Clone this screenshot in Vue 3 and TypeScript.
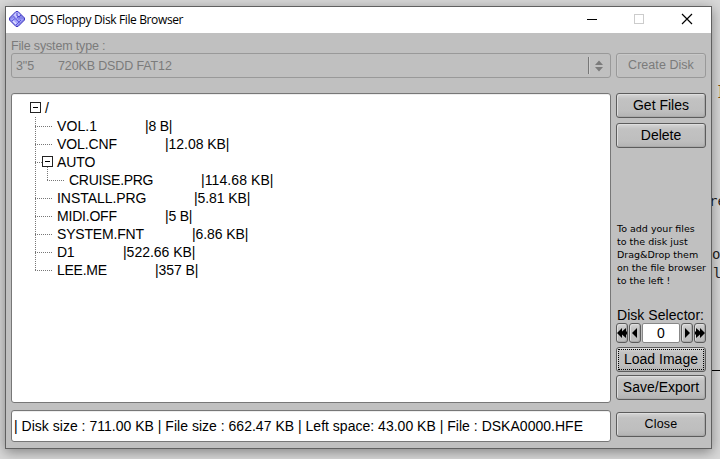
<script setup lang="ts">
interface Entry {
  name: string
  textWidth: number
  size?: string
  sizeX?: number
  sizeWidth?: number
  nested?: boolean
  last?: boolean
}

const entries: Entry[] = [
  { name: 'VOL.1', textWidth: 40, size: '|8 B|', sizeX: 88, sizeWidth: 27.5 },
  { name: 'VOL.CNF', textWidth: 60, size: '|12.08 KB|', sizeX: 108, sizeWidth: 64.5 },
  { name: 'AUTO', textWidth: 38.5 },
  { name: 'CRUISE.PRG', textWidth: 84.5, size: '|114.68 KB|', sizeX: 132, sizeWidth: 72.5, nested: true },
  { name: 'INSTALL.PRG', textWidth: 89.5, size: '|5.81 KB|', sizeX: 137, sizeWidth: 56.5 },
  { name: 'MIDI.OFF', textWidth: 60, size: '|5 B|', sizeX: 108, sizeWidth: 27.5 },
  { name: 'SYSTEM.FNT', textWidth: 87, size: '|6.86 KB|', sizeX: 135, sizeWidth: 56.5 },
  { name: 'D1', textWidth: 17.5, size: '|522.66 KB|', sizeX: 66, sizeWidth: 72.5 },
  { name: 'LEE.ME', textWidth: 50, size: '|357 B|', sizeX: 98, sizeWidth: 43.5, last: true },
]

const hint: string[] = ['To add your files', 'to the disk just', 'Drag&Drop them', 'on the file browser', 'to the left !']
</script>

<template>
  <div class="desktop">
    <span class="behind b1">]</span>
    <span class="behind b2">re</span>
    <span class="behind b3">o</span>
    <span class="behind b4">l</span>
    <span class="rule"></span>

    <div class="window">
      <header class="titlebar">
        <svg class="logo" width="16" height="16" viewBox="0 0 16 16">
          <path d="M7 .5h2L15.5 7v2L9 15.5H7L.5 9V7z" fill="#8585ea" stroke="#4038c0" />
          <path d="M7 1.5 3.5 5l4 3.7L12 4.6 9 1.5z" fill="#c8c8ff" />
          <path d="m4 4.5 3 3.3 5-3.6M8 2v3l3 1" fill="none" stroke="#463fd0" />
          <path d="m1.5 8 5-1.5 3 2.5 5-1-6.500 6.500z" fill="#a8a8fa" />
          <path d="m3 10 3-2.500 4.500 4M7 14l5-5" fill="none" stroke="#5850da" />
          <path d="m4 10 3 3" stroke="#e0e0ff" stroke-width="1.500" />
        </svg>
        <span class="title">DOS Floppy Disk File Browser</span>
        <svg class="controls" width="120" height="20" viewBox="0 0 120 20" shape-rendering="crispEdges">
          <path d="M1 9.500h10" stroke="#000" />
          <rect x="48.500" y="4.500" width="9" height="9" fill="none" stroke="#ccc" />
          <path d="m96 4 10 10M106 4 96 14" stroke="#000" shape-rendering="auto" stroke-width="1.200" />
        </svg>
      </header>

      <main class="content">
        <section class="left">
          <label class="fs-label">File system type :</label>
          <div class="combo">
            <span class="combo-id">3"5</span>
            <span class="combo-name">720KB DSDD FAT12</span>
            <span class="divider"></span>
            <svg width="8" height="12" viewBox="0 0 8 12">
              <path d="M4 .5 8 5H0zM4 11.500 8 7H0z" fill="#7b7b7b" />
            </svg>
          </div>
          <div class="tree">
            <div class="row root">
              <svg class="toggle" width="11" height="11" viewBox="0 0 11 11" shape-rendering="crispEdges">
                <path d="M.5.5h10v10H.5z" fill="#fff" stroke="#222" /><path d="M3 5.500h5" stroke="#000" />
              </svg>
              <span class="root-name">/</span>
            </div>
            <div v-for="entry in entries" :key="entry.name" class="row">
              <svg class="lines" :width="entry.nested ? 34 : 22" height="18" shape-rendering="crispEdges">
                <g fill="none" stroke="#777" stroke-dasharray="1 1">
                  <path :d="entry.last ? 'M.5 0v9' : 'M.5 0v18'" />
                  <path v-if="entry.nested" d="M12.500 0v9M12 9.500h17" />
                  <path v-else d="M0 9.500h17" />
                </g>
                <g v-if="entry.name === 'AUTO'">
                  <path d="M12.500 14v4" stroke="#777" stroke-dasharray="1 1" />
                  <path d="M7.500 3.500h10v10h-10z" fill="#fff" stroke="#222" />
                  <path d="M10 8.500h5" stroke="#000" />
                </g>
              </svg>
              <svg class="text" height="18" width="240">
                <text x="0" y="14" :textLength="entry.textWidth">{{ entry.name }}</text>
                <text v-if="entry.size" :x="entry.sizeX" y="14" :textLength="entry.sizeWidth">{{ entry.size }}</text>
              </svg>
            </div>
          </div>
          <div class="status">
            <svg width="590" height="20"><text x="0" y="15" textLength="569">| Disk size : 711.00 KB | File size : 662.47 KB | Left space: 43.00 KB | File : DSKA0000.HFE</text></svg>
          </div>
        </section>

        <aside class="right">
          <button class="btn disabled">Create Disk</button>
          <button class="btn get">Get Files</button>
          <button class="btn delete">Delete</button>
          <p class="hint"><span v-for="line in hint" :key="line">{{ line }}</span></p>
          <div class="sel-label">Disk Selector:</div>
          <div class="selector">
            <button class="btn mini"><svg width="10" height="10" viewBox="0 0 10 10"><path d="M5 0v3.500L9 0v3.500h1v3H9V10L5 6.500V10L0 5z" /></svg></button>
            <button class="btn mini"><svg width="6" height="10" viewBox="0 0 6 10"><path d="M5 0v10L0 5z" /></svg></button>
            <div class="number">0</div>
            <button class="btn mini"><svg width="6" height="10" viewBox="0 0 6 10"><path d="M1 0v10l5-5z" /></svg></button>
            <button class="btn mini"><svg width="10" height="10" viewBox="0 0 10 10"><path d="M5 0v3.500L1 0v3.500H0v3h1V10l4-3.500V10l5-5z" /></svg></button>
          </div>
          <button class="btn load"><span class="focus">Load Image</span></button>
          <button class="btn save">Save/Export</button>
          <button class="btn close">Close</button>
        </aside>
      </main>
    </div>
  </div>
</template>

<style>
body {
  overflow: hidden;
}
</style>

<style scoped>
.desktop {
  box-sizing: border-box;
  width: 720px;
  height: 459px;
  padding: 6px 0 0 5px;
  position: relative;
  overflow: hidden;
  background: #d8d8d8;
  font-family: 'Liberation Sans', Arial, sans-serif;
  font-size: 14px;
  color: #000;
}
.behind {
  position: absolute;
  font: 14px/16px 'DejaVu Sans Mono', monospace;
  color: #222;
}
.b1 { left: 716px; top: 83px; color: #80500f; }
.b2 { left: 709px; top: 193px; }
.b3 { left: 712px; top: 246px; }
.b4 { left: 713px; top: 265px; }
.rule {
  position: absolute;
  left: 711px;
  top: 370px;
  width: 9px;
  height: 1px;
  background: #000;
}
.window {
  box-sizing: border-box;
  position: relative;
  width: 707px;
  height: 443px;
  border: 1px solid #606060;
  background: #c0c0c0;
  box-shadow: 0 3px 12px rgba(0, 0, 0, 0.4);
}
.titlebar {
  display: flex;
  align-items: center;
  height: 26px;
  background: #fff;
}
.logo { margin: 0 5px 2px 3px; }
.title {
  flex: 1;
  font: 12px/24px 'Open Sans', 'Noto Sans', sans-serif;
  letter-spacing: -0.37px;
}
.controls { margin-right: 5px; }
.content {
  display: flex;
  gap: 5px;
  padding: 4px 5px 0;
}
.left { width: 600px; }
.right {
  width: 90px;
  padding-top: 16px;
}
.fs-label {
  display: block;
  height: 16px;
  line-height: 18px;
  font-size: 12.500px;
  letter-spacing: -0.16px;
  color: #7b7b7b;
}
.combo {
  box-sizing: border-box;
  display: flex;
  align-items: center;
  height: 25px;
  padding: 0 7px 0 4px;
  border: 1px solid #999;
  border-radius: 3px;
  font-size: 12.500px;
  letter-spacing: -0.13px;
  color: #7b7b7b;
}
.combo-id { width: 42px; }
.combo-name { flex: 1; }
.divider {
  width: 1px;
  height: 17px;
  margin-right: 6px;
  background: #777;
  box-shadow: 1px 0 #d0d0d0;
}
.tree, .status {
  box-sizing: border-box;
  border: 1px solid #777;
  border-radius: 3px;
  background: #fff;
  box-shadow: inset 0 1px #eee;
}
.tree {
  height: 310px;
  margin-top: 15px;
  padding: 5px 0 0 18px;
}
.row {
  display: flex;
  height: 18px;
  padding-left: 5px;
}
.row.root {
  align-items: center;
  padding-left: 0;
}
.toggle { margin-top: -1px; }
.root-name { margin-left: 4px; line-height: 18px; }
.lines { flex: none; }
.text { display: block; overflow: visible; }
.status {
  display: flex;
  align-items: center;
  height: 32px;
  margin-top: 7px;
  padding-left: 2px;
}
.btn {
  box-sizing: border-box;
  display: flex;
  align-items: center;
  justify-content: center;
  width: 90px;
  height: 25px;
  margin: 0;
  padding: 0 0 1px;
  border: 1px solid #5c5c5c;
  border-radius: 3px;
  background: linear-gradient(#d6d6d6, #c2c2c2 5px, #bebebe 17px, #b3b3b3);
  box-shadow: inset 1px 1px #dedede, inset -1px -1px #aaa;
  font: 14px 'Liberation Sans', Arial, sans-serif;
  color: #000;
  white-space: nowrap;
}
.disabled {
  border-color: #999;
  background: #c0c0c0;
  box-shadow: inset 1px 1px #c9c9c9;
  font-size: 12.500px;
  letter-spacing: 0.05px;
  color: #7b7b7b;
}
.get { margin-top: 15px; }
.delete { margin-top: 5px; }
.hint {
  display: flex;
  flex-direction: column;
  height: 65px;
  margin: 74px 0 0 1px;
  font: 9.500px/13px 'DejaVu Sans', sans-serif;
  white-space: nowrap;
}
.sel-label {
  height: 16px;
  margin: 20px 0 0 1px;
  line-height: 16px;
  letter-spacing: 0.05px;
  white-space: nowrap;
}
.selector {
  display: flex;
  gap: 1px;
  height: 20px;
}
.mini {
  width: 12px;
  height: 20px;
  padding: 0 0 1px;
}
.mini svg { flex: none; }
.number {
  box-sizing: border-box;
  width: 38px;
  height: 20px;
  border: 1px solid #888;
  border-radius: 2px;
  background: #fff;
  line-height: 19px;
  text-align: center;
}
.load { margin-top: 4px; padding: 0; }
.focus {
  box-sizing: border-box;
  width: 86px;
  height: 21px;
  border: 1px dotted #000;
  line-height: 19px;
  text-align: center;
}
.save { margin-top: 3px; }
.close { margin-top: 12px; font-size: 12.500px; letter-spacing: 0.2px; }
</style>
